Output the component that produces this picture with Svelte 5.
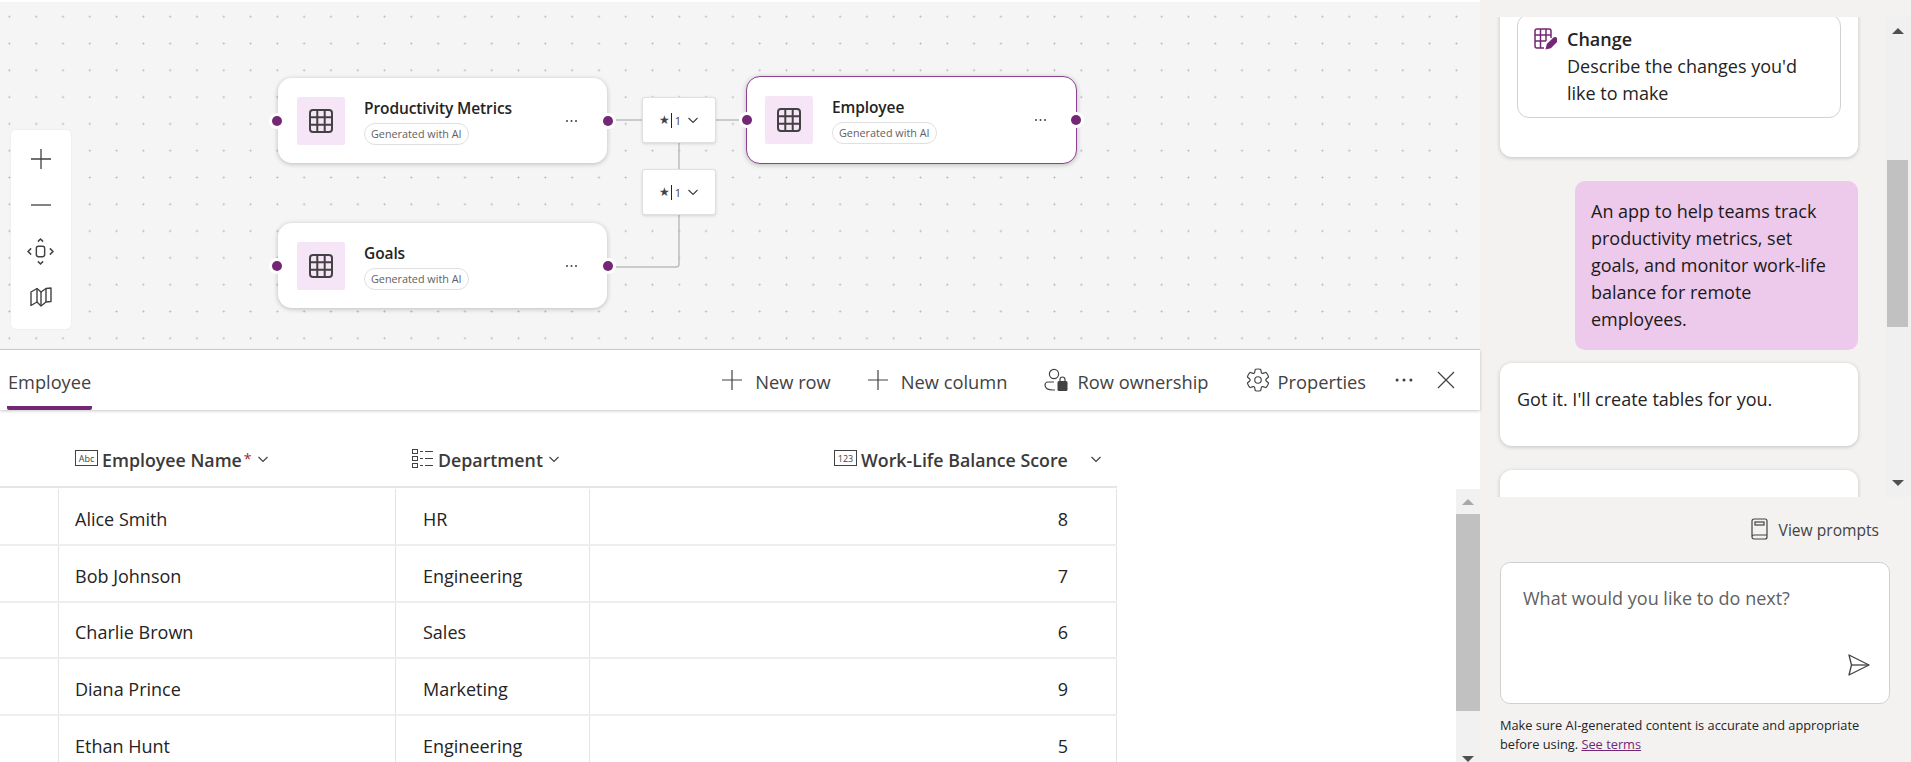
<script>
  const nodes = [
    { name: "Productivity Metrics", x: 278, y: 78, w: 329, h: 85, active: false },
    { name: "Goals", x: 278, y: 223, w: 329, h: 85, active: false },
    { name: "Employee", x: 746, y: 76, w: 331, h: 88, active: true },
  ];

  const relations = [
    { x: 642, y: 95 },
    { x: 642, y: 167 },
  ];

  const rows = [
    { name: "Alice Smith", dept: "HR", score: 8 },
    { name: "Bob Johnson", dept: "Engineering", score: 7 },
    { name: "Charlie Brown", dept: "Sales", score: 6 },
    { name: "Diana Prince", dept: "Marketing", score: 9 },
    { name: "Ethan Hunt", dept: "Engineering", score: 5 },
  ];
</script>

{#snippet gridIcon()}
  <svg class="grid-icon" width="26" height="26" viewBox="0 0 26 26" fill="none" stroke="#424242" stroke-width="2">
    <rect x="2" y="2" width="22" height="22" rx="3" />
    <path d="M9.3 2v22M16.7 2v22M2 9.3h22M2 16.7h22" />
  </svg>
{/snippet}

{#snippet chevron(size = 12)}
  <svg width={size} height={size} viewBox="0 0 12 12" fill="none" stroke="#424242" stroke-width="1.2">
    <path d="M1.5 4l4.5 4.5L10.5 4" />
  </svg>
{/snippet}

{#snippet plus()}
  <svg width="20" height="20" viewBox="0 0 20 20" stroke="#424242" stroke-width="1.2">
    <path d="M10 0v20M0 10h20" />
  </svg>
{/snippet}

{#snippet dots(w = 13)}
  <svg width={w} height={w * 4 / 13} viewBox="0 0 13 4" fill="#424242">
    <circle cx="2" cy="2" r="1" />
    <circle cx="6.500" cy="2" r="1" />
    <circle cx="11" cy="2" r="1" />
  </svg>
{/snippet}

<div class="app">
  <div class="main">
    <div class="canvas">
      <svg class="wires" width="1480" height="347" fill="none" stroke="#bdbdbd" stroke-width="1.5">
        <path d="M616 118h130" />
        <path d="M679 118v144a3 3 0 0 1-3 3H616" />
      </svg>

      <div class="zoomer">
        <button aria-label="Zoom in">
          <svg width="20" height="20" viewBox="0 0 20 20" stroke="#424242" stroke-width="1.3"><path d="M10 0v20M0 10h20" /></svg>
        </button>
        <button aria-label="Zoom out">
          <svg width="20" height="20" viewBox="0 0 20 20" stroke="#424242" stroke-width="1.3"><path d="M0 10h20" /></svg>
        </button>
        <button aria-label="Fit view">
          <svg width="27" height="27" viewBox="0 0 26 26" fill="none" stroke="#424242" stroke-width="1.4">
            <rect x="9" y="8" width="8" height="10" rx="2" />
            <path d="M10.5 3.5L13 1l2.5 2.5M10.5 22.5L13 25l2.5-2.5M4 10l-3 3 3 3M22 10l3 3-3 3" />
          </svg>
        </button>
        <button aria-label="Mini map">
          <svg width="22" height="20" viewBox="0 0 22 20" fill="none" stroke="#424242" stroke-width="1.4" stroke-linejoin="round">
            <path d="M1 5l6-3.5L11 5l5-3.5 5-.5v13.5L16 15l-5 4-4-4-6 3.500z" />
            <path d="M7 1.500V15M11 5v14M16 1.500V15" />
          </svg>
        </button>
      </div>

      {#each relations as r}
        <div class="relation" style="left: {r.x}px; top: {r.y}px">
          <span class="star">★</span><span class="bar"></span><span class="one">1</span>
          <span class="rel-chev">{@render chevron(12)}</span>
        </div>
      {/each}

      {#each nodes as n}
        <div class="node" class:active={n.active} style="left: {n.x}px; top: {n.y - 2}px; width: {n.w}px; height: {n.h}px">
          <div class="tile">{@render gridIcon()}</div>
          <div class="node-text">
            <div class="node-title">{n.name}</div>
            <div class="badge">Generated with AI</div>
          </div>
          <div class="node-more">{@render dots()}</div>
          <span class="port left"></span>
          <span class="port right"></span>
        </div>
      {/each}
    </div>

    <div class="toolbar">
      <div class="tab">Employee</div>
      <div class="actions">
        <div class="action">{@render plus()}<span>New row</span></div>
        <div class="action">{@render plus()}<span>New column</span></div>
        <div class="action tight">
          <svg width="25" height="24" viewBox="0 0 25 24" fill="none" stroke="#424242" stroke-width="1.2">
            <circle cx="10" cy="6" r="4.600" />
            <path d="M10 14H4a3 3 0 0 0-3 3c0 3 3 5 8 5h2" />
            <rect x="13.500" y="13" width="10" height="10" rx="1.500" fill="#424242" stroke="none" />
            <path d="M16 13v-1.500a2.500 2.500 0 0 1 5 0V13" />
          </svg>
          <span>Row ownership</span>
        </div>
        <div class="action gear">
          <svg width="26" height="26" viewBox="0 0 20 20" fill="none" stroke="#424242" stroke-width="0.9">
            <path d="M1.910 7.380A8.500 8.500 0 0 1 3.660 4.340a.5.5 0 0 1 .54-.14l1.920.69a1 1 0 0 0 1.320-.76l.36-2a.5.5 0 0 1 .39-.4 8.500 8.500 0 0 1 3.600 0 .5.5 0 0 1 .39.4l.36 2a1 1 0 0 0 1.320.76l1.920-.69a.5.5 0 0 1 .54.14 8.500 8.500 0 0 1 1.750 3.040.5.5 0 0 1-.15.53l-1.560 1.320a1 1 0 0 0 0 1.520l1.560 1.320a.5.5 0 0 1 .15.53 8.500 8.500 0 0 1-1.750 3.040.5.5 0 0 1-.54.14l-1.920-.69a1 1 0 0 0-1.320.76l-.36 2a.5.5 0 0 1-.39.4 8.500 8.500 0 0 1-3.600 0 .5.5 0 0 1-.39-.4l-.36-2a1 1 0 0 0-1.320-.76l-1.920.69a.5.5 0 0 1-.54-.14 8.500 8.500 0 0 1-1.750-3.040.5.5 0 0 1 .15-.53l1.560-1.320a1 1 0 0 0 0-1.520L2.060 7.910a.5.5 0 0 1-.15-.53Z" />
            <circle cx="10" cy="10" r="2.500" />
          </svg>
          <span>Properties</span>
        </div>
        <div class="more">{@render dots(20)}</div>
        <svg class="close" width="18" height="18" viewBox="0 0 18 18" stroke="#424242" stroke-width="1.2">
          <path d="M1 1l16 16M17 1L1 17" />
        </svg>
      </div>
    </div>

    <div class="table-area">
      <div class="table">
        <div class="head">
          <div class="hcell name-col">
            <svg class="type-icon" width="23" height="16" viewBox="0 0 23 16" fill="none" stroke="#424242">
              <rect x="0.500" y="0.500" width="22" height="15" />
              <text x="11.500" y="11.500" text-anchor="middle" class="type-text" fill="#424242" stroke="none">Abc</text>
            </svg>
            <span class="htext">Employee Name</span><span class="req">*</span>
            <span class="hchev near">{@render chevron(12)}</span>
          </div>
          <div class="hcell dept-col">
            <svg class="type-icon" width="22" height="19" viewBox="0 0 22 19" fill="none" stroke="#424242">
              <rect x="0.500" y="0.500" width="5" height="4" />
              <rect x="0.500" y="7.500" width="5" height="4" />
              <rect x="0.500" y="14.500" width="5" height="4" />
              <path d="M8 2.500h3M13 2.500h8M8 9.500h3M13 9.500h8M8 16.500h3M13 16.500h8" />
            </svg>
            <span class="htext">Department</span>
            <span class="hchev near">{@render chevron(12)}</span>
          </div>
          <div class="hcell score-col">
            <svg class="type-icon" width="23" height="16" viewBox="0 0 23 16" fill="none" stroke="#424242">
              <rect x="0.500" y="0.500" width="22" height="15" />
              <text x="11.500" y="11.500" text-anchor="middle" class="type-text" fill="#424242" stroke="none">123</text>
            </svg>
            <span class="htext">Work-Life Balance Score</span>
            <span class="hchev far">{@render chevron(12)}</span>
          </div>
        </div>
        <div class="rows">
          {#each rows as r}
            <div class="row">
              <div class="cell select-col"></div>
              <div class="cell name-cell">{r.name}</div>
              <div class="cell dept-cell">{r.dept}</div>
              <div class="cell num-cell">{r.score}</div>
            </div>
          {/each}
        </div>
      </div>

      <div class="table-scroll">
        <span class="arrow up"></span>
        <div class="thumb"></div>
        <span class="arrow down"></span>
      </div>
    </div>
  </div>

  <aside class="panel">
    <div class="chat-wrap">
      <div class="chat">
        <div class="card first">
          <div class="option">
            <svg class="option-icon" width="23" height="22" viewBox="0 0 23 22" fill="none" stroke="#742774" stroke-width="1.500">
              <path d="M10 20H3a2 2 0 0 1-2-2V3a2 2 0 0 1 2-2h12a2 2 0 0 1 2 2v7" />
              <path d="M1 7h16M1 13h11M6.500 1v19M12 1v12" />
              <path d="M12.500 20.500l1-4 6-6a2 2 0 0 1 3 3l-6 6z" fill="#742774" />
            </svg>
            <div>
              <div class="option-title">Change</div>
              <div>Describe the changes you'd like to make</div>
            </div>
          </div>
        </div>

        <div class="bubble">An app to help teams track productivity metrics, set goals, and monitor work-life balance for remote employees.</div>

        <div class="card reply">Got it. I'll create tables for you.</div>

        <div class="card tail"></div>
      </div>
      <div class="chat-scroll">
        <span class="arrow up dark"></span>
        <div class="thumb"></div>
        <span class="arrow down dark"></span>
      </div>
    </div>

    <div class="composer">
      <div class="prompts">
        <svg width="17" height="23" viewBox="0 0 17 23" fill="none" stroke="#424242" stroke-width="1.200">
          <path d="M1 19V3a2 2 0 0 1 2-2h11a2 2 0 0 1 2 2v16a2 2 0 0 1-2 2H3a2 2 0 0 1-2-2Zm0 0a2 2 0 0 1 2-2h13" />
          <rect x="4" y="4" width="9" height="3" />
        </svg>
        <span>View prompts</span>
      </div>
      <div class="input">
        <div class="placeholder">What would you like to do next?</div>
        <svg class="send" width="22" height="22" viewBox="0 0 22 22" fill="none" stroke="#424242" stroke-width="1.300" stroke-linejoin="round">
          <path d="M1 1l20 10L1 21l2.500-10z" />
          <path d="M3.500 11H21" />
        </svg>
      </div>
      <p class="disclaimer">Make sure AI-generated content is accurate and appropriate before using. <a href="#terms">See terms</a></p>
    </div>
  </aside>
</div>

<style>
  :global(body) {
    margin: 0;
    background: #fff;
  }

  .app {
    display: flex;
    width: 1911px;
    height: 762px;
    overflow: hidden;
    font-family: "Open Sans", "Noto Sans", sans-serif;
    font-size: 18px;
    color: #242424;
  }

  .main {
    width: 1480px;
    flex: none;
    display: flex;
    flex-direction: column;
    padding-top: 2px;
    box-sizing: border-box;
  }

  /* canvas */
  .canvas {
    position: relative;
    height: 348px;
    flex: none;
    box-sizing: border-box;
    border-bottom: 1px solid #d1d1d1;
    background-color: #f5f5f5;
    background-image: radial-gradient(circle, #b8b8b8 0.8px, transparent 1.2px);
    background-size: 26.8px 26.8px;
    background-position: -4px 1.3px;
  }

  .wires {
    position: absolute;
    left: 0;
    top: 0;
  }

  .zoomer {
    position: absolute;
    left: 11px;
    top: 128px;
    width: 60px;
    height: 199px;
    box-sizing: border-box;
    padding: 6px 0;
    background: #fff;
    border-radius: 5px;
    box-shadow: 0 0 2px rgba(0, 0, 0, 0.08);
    display: flex;
    flex-direction: column;
  }

  .zoomer button {
    height: 46px;
    flex: none;
    border: 0;
    padding: 0;
    background: none;
    display: flex;
    align-items: center;
    justify-content: center;
    margin-left: -1px;
  }

  .relation {
    position: absolute;
    width: 74px;
    height: 46px;
    box-sizing: border-box;
    background: #fff;
    border: 1px solid #e0e0e0;
    border-radius: 3px;
    box-shadow: 0 1px 3px rgba(0, 0, 0, 0.14);
    display: flex;
    align-items: center;
    padding-left: 16px;
    font-size: 11px;
    color: #424242;
  }

  .star {
    font-family: "DejaVu Sans", sans-serif;
    font-size: 12px;
    line-height: 1;
  }

  .bar {
    width: 1px;
    height: 15px;
    background: #242424;
    margin: 0 3px 0 1px;
  }

  .rel-chev {
    display: flex;
    margin-left: 6px;
  }

  .node {
    position: absolute;
    box-sizing: border-box;
    display: flex;
    align-items: center;
    padding-left: 19px;
    background: #fff;
    border-radius: 14px;
    box-shadow: 0 1px 5px rgba(0, 0, 0, 0.24);
  }

  .node.active {
    border: 1.500px solid #8f3f92;
    padding-left: 18px;
  }

  .tile {
    width: 48px;
    height: 48px;
    flex: none;
    background: #f6e5f6;
    border-radius: 2px;
    display: flex;
    align-items: center;
    justify-content: center;
  }

  .node-text {
    margin-left: 19px;
    flex: 1;
    padding-top: 3.700px;
  }

  .node-title {
    font-size: 15.500px;
    font-weight: 600;
    line-height: 20px;
    margin-bottom: 5px;
    color: #242424;
    letter-spacing: -0.1px;
  }

  .badge {
    display: inline-block;
    vertical-align: top;
    box-sizing: border-box;
    height: 22px;
    line-height: 20px;
    padding: 0 6px;
    border: 1px solid #e0e0e0;
    border-radius: 11px;
    font-size: 10.800px;
    color: #616161;
  }

  .node-more {
    display: flex;
    margin-right: 29px;
  }

  .port {
    position: absolute;
    top: 50%;
    width: 10px;
    height: 10px;
    margin-top: -5px;
    border-radius: 50%;
    background: #742774;
    box-shadow: 0 0 0 3px #fff;
  }

  .port.left {
    left: -6px;
  }

  .port.right {
    right: -6px;
  }

  .active .port.left {
    left: -5px;
  }

  .active .port.right {
    right: -5px;
  }

  /* command bar */
  .toolbar {
    height: 60px;
    flex: none;
    box-sizing: border-box;
    display: flex;
    align-items: center;
    justify-content: space-between;
    background: #fff;
    box-shadow: 0 1px 3px rgba(0, 0, 0, 0.22);
    position: relative;
    z-index: 1;
  }

  .tab {
    margin-left: 7px;
    height: 60px;
    line-height: 64px;
    box-sizing: border-box;
    font-size: 18.200px;
    font-weight: 500;
    border-bottom: 4px solid #742774;
    border-radius: 0 0 2px 2px;
    padding: 0 1px;
    color: #424242;
  }

  .actions {
    display: flex;
    align-items: center;
    margin-right: 25px;
  }

  .action {
    display: flex;
    align-items: center;
    gap: 13px;
    margin-left: 37px;
    font-size: 18.300px;
    font-weight: 500;
    color: #424242;
  }

  .action span {
    padding-top: 2px;
  }

  .action.tight {
    gap: 8px;
  }

  .action.gear {
    gap: 7px;
    margin-left: 36px;
  }

  .more {
    display: flex;
    margin-left: 28px;
  }

  .close {
    margin-left: 23px;
  }

  /* table */
  .table-area {
    flex: 1;
    display: flex;
    justify-content: space-between;
    min-height: 0;
  }

  .table {
    width: 1117px;
    overflow: hidden;
  }

  .head {
    height: 78px;
    box-sizing: border-box;
    border-bottom: 2px solid #e6e6e6;
    display: grid;
    grid-template-columns: 396px 194px 527px;
  }

  .hcell {
    display: flex;
    align-items: center;
    padding-top: 24px;
    font-size: 17.800px;
    font-weight: 600;
    color: #3b3a39;
  }

  .name-col {
    padding-left: 75px;
  }

  .dept-col {
    padding-left: 16px;
  }

  .score-col {
    padding-left: 244px;
  }

  .type-icon {
    flex: none;
    margin-top: -4px;
    margin-right: 4px;
  }

  .type-text {
    font-size: 9px;
    font-family: "Open Sans", sans-serif;
    font-weight: 400;
  }

  .req {
    margin-left: 2px;
    color: #a4262c;
    font-weight: 400;
    font-size: 14px;
    margin-top: -3px;
  }

  .hchev {
    display: flex;
    margin-top: -2px;
  }

  .hchev.near {
    margin-left: 5px;
  }

  .hchev.far {
    margin-left: 22px;
  }

  .rows {
    margin-top: 1px;
  }

  .row {
    display: grid;
    grid-template-columns: 59px 337px 194px 527px;
    height: 56.750px;
    box-sizing: border-box;
    border-bottom: 2px solid #eeeeee;
  }

  .cell {
    display: flex;
    align-items: center;
    box-sizing: border-box;
    padding-top: 5px;
    border-right: 1px solid #e4e4e4;
    font-size: 18px;
    color: #242424;
  }

  .name-cell {
    padding-left: 16px;
  }

  .dept-cell {
    padding-left: 27px;
  }

  .num-cell {
    justify-content: flex-end;
    padding-right: 48px;
  }

  .table-scroll {
    position: relative;
    width: 24px;
    background: #f1f1f1;
    height: 273px;
    align-self: flex-end;
  }

  .table-scroll .thumb {
    position: absolute;
    left: 0;
    right: 0;
    top: 25px;
    height: 197px;
    background: #c1c1c1;
  }

  .arrow {
    position: absolute;
    left: 50%;
    margin-left: -6px;
    width: 0;
    height: 0;
    border-left: 6px solid transparent;
    border-right: 6px solid transparent;
  }

  .arrow.up {
    top: 10px;
    border-bottom: 6px solid #a8a8a8;
  }

  .arrow.down {
    bottom: 0;
    border-top: 6px solid #505050;
  }

  /* right panel */
  .panel {
    flex: 1;
    background: #f3f2f1;
    display: flex;
    flex-direction: column;
  }

  .chat-wrap {
    height: 480px;
    margin-top: 17px;
    flex: none;
    display: flex;
    overflow: hidden;
  }

  .chat {
    width: 405px;
    flex: none;
    box-sizing: border-box;
    padding-left: 20px;
    display: flex;
    flex-direction: column;
    align-items: flex-end;
    line-height: 27px;
    font-size: 18px;
  }

  .card {
    align-self: flex-start;
    width: 358px;
    box-sizing: border-box;
    background: #fff;
    border-radius: 12px;
    box-shadow: 0 1px 4px rgba(0, 0, 0, 0.2);
    flex: none;
  }

  .first {
    margin-top: -30px;
    padding: 27px 17px 39px;
    border-radius: 0 0 12px 12px;
  }

  .option {
    display: flex;
    box-sizing: border-box;
    height: 104px;
    padding: 11px 16px 0;
    gap: 10px;
    border: 1px solid #d1d1d1;
    border-radius: 12px;
  }

  .option-icon {
    flex: none;
    margin-top: 2px;
  }

  .option-title {
    font-weight: 600;
    color: #242424;
  }

  .bubble {
    width: 283px;
    margin-top: 24px;
    margin-right: 27px;
    box-sizing: border-box;
    padding: 17px 16px;
    background: #edc9ec;
    border-radius: 10px;
    color: #1b1a19;
    flex: none;
  }

  .reply {
    margin-top: 13px;
    height: 83px;
    padding: 23px 17px;
  }

  .tail {
    margin-top: 24px;
    height: 60px;
  }

  .chat-scroll {
    position: relative;
    flex: 1;
    background: #f0f0f0;
  }

  .chat-scroll .thumb {
    position: absolute;
    left: 2px;
    width: 21px;
    top: 143px;
    height: 167px;
    background: #c1c1c1;
  }

  .arrow.dark.up {
    top: 11px;
    border-bottom-color: #505050;
  }

  .arrow.dark.down {
    bottom: 11px;
  }

  .composer {
    flex: 1;
    box-sizing: border-box;
    padding: 0 20px;
    background: #f3f2f1;
  }

  .prompts {
    height: 65px;
    display: flex;
    align-items: center;
    justify-content: flex-end;
    gap: 11px;
    padding-right: 12px;
    font-size: 15.600px;
    color: #424242;
  }

  .input {
    position: relative;
    height: 142px;
    width: 390px;
    box-sizing: border-box;
    background: #fff;
    border: 1px solid #d1d1d1;
    border-radius: 10px;
    padding: 22px 22px;
  }

  .placeholder {
    font-size: 18px;
    line-height: 27px;
    color: #616161;
  }

  .send {
    position: absolute;
    right: 19px;
    bottom: 27px;
  }

  .disclaimer {
    margin: 12px 0 0;
    width: 390px;
    font-size: 12.800px;
    line-height: 19px;
    color: #242424;
  }

  .disclaimer a {
    color: #742774;
  }
</style>
